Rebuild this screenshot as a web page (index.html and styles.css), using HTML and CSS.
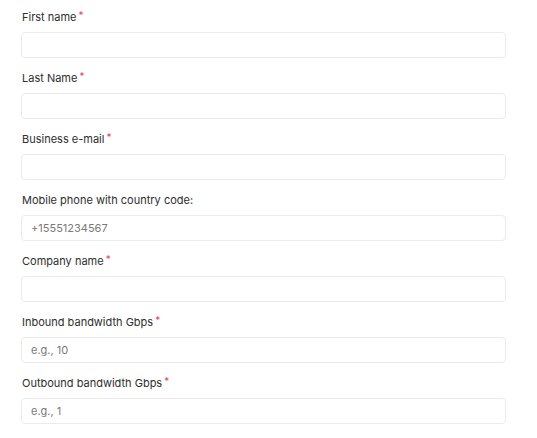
FILE: index.html
```html
<!DOCTYPE html>
<html lang="en">
<head>
<meta charset="utf-8">
<title>Form</title>
<link rel="stylesheet" href="styles.css">
</head>
<body>
<form class="form">
  <div class="field">
    <label class="label">First name<span class="req">*</span></label>
    <input class="input" type="text">
  </div>
  <div class="field">
    <label class="label">Last Name<span class="req">*</span></label>
    <input class="input" type="text">
  </div>
  <div class="field">
    <label class="label">Business e-mail<span class="req">*</span></label>
    <input class="input" type="email">
  </div>
  <div class="field">
    <label class="label">Mobile phone with country code:</label>
    <input class="input" type="tel" placeholder="+15551234567">
  </div>
  <div class="field">
    <label class="label">Company name<span class="req">*</span></label>
    <input class="input" type="text">
  </div>
  <div class="field">
    <label class="label">Inbound bandwidth Gbps<span class="req">*</span></label>
    <input class="input" type="text" placeholder="e.g., 10">
  </div>
  <div class="field">
    <label class="label">Outbound bandwidth Gbps<span class="req">*</span></label>
    <input class="input" type="text" placeholder="e.g., 1">
  </div>
</form>
</body>
</html>
```
FILE: styles.css
```css
html, body {
  margin: 0;
  padding: 0;
  background: #ffffff;
}
body {
  font-family: Inter, "Liberation Sans", Arial, sans-serif;
  color: #2b2b2b;
}
.form {
  display: flex;
  flex-direction: column;
  gap: 13px;
  width: 485px;
  padding: 10px 0 0 21px;
}
.field {
  display: flex;
  flex-direction: column;
  gap: 7px;
}
.label {
  display: block;
  font-size: 11px;
  line-height: 15px;
  padding-left: 1px;
  color: #2e2e2e;
}
.req {
  color: #e5484d;
  font-size: 10px;
  line-height: 0;
  vertical-align: 2px;
  margin-left: 2px;
}
.input {
  box-sizing: border-box;
  width: 100%;
  height: 26px;
  margin: 0;
  padding: 0 9px;
  border: 1px solid #ebebeb;
  border-radius: 4px;
  background: #ffffff;
  font-family: Inter, "Liberation Sans", Arial, sans-serif;
  font-size: 11px;
  color: #333;
  outline: none;
}
.input::placeholder {
  color: #7a7a7a;
}
```
